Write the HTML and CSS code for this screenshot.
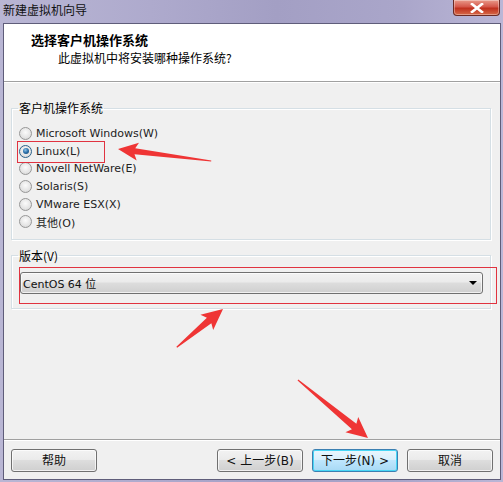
FILE: index.html
```html
<!DOCTYPE html>
<html lang="zh">
<head>
<meta charset="utf-8">
<title>新建虚拟机向导</title>
<link rel="stylesheet" href="styles.css">
</head>
<body>
<div class="window">
  <div class="titlebar">
    <span class="title">新建虚拟机向导</span>
    <div class="close">
      <svg width="14" height="10" viewBox="0 0 14 10"><path d="M2 1 L12 9 M12 1 L2 9" stroke="#fff" stroke-width="2.6" stroke-linecap="square"/></svg>
    </div>
  </div>
  <div class="client">
    <div class="header">
      <div class="h-title">选择客户机操作系统</div>
      <div class="h-sub">此虚拟机中将安装哪种操作系统?</div>
    </div>
    <div class="body">
      <fieldset class="group group-os">
        <legend>客户机操作系统</legend>
        <ul class="radios">
          <li class="radio-item"><span class="radio"></span>Microsoft Windows(W)</li>
          <li class="radio-item"><span class="radio checked"></span>Linux(L)</li>
          <li class="radio-item"><span class="radio"></span>Novell NetWare(E)</li>
          <li class="radio-item"><span class="radio"></span>Solaris(S)</li>
          <li class="radio-item"><span class="radio"></span>VMware ESX(X)</li>
          <li class="radio-item"><span class="radio"></span>其他(O)</li>
        </ul>
      </fieldset>
      <fieldset class="group group-ver">
        <legend>版本(V)</legend>
        <div class="combo">
          <span class="combo-text">CentOS 64 位</span>
          <span class="combo-arrow"></span>
        </div>
      </fieldset>
    </div>
    <div class="footer">
      <button class="btn">帮助</button>
      <div class="btn-group">
        <button class="btn">&lt; 上一步(B)</button>
        <button class="btn btn-default">下一步(N) &gt;</button>
        <button class="btn">取消</button>
      </div>
    </div>
  </div>
  <div class="mark mark-linux"></div>
  <div class="mark mark-combo"></div>
  <svg class="annot" width="503" height="482" viewBox="0 0 503 482">
    <g fill="#ef3535">
      <polygon transform="translate(118,149) rotate(187.35)" points="0,0 -20,-9 -17,-3 -94,-0.6 -94,0.6 -17,3 -20,9"/>
      <polygon transform="translate(223,309) rotate(-39.56)" points="0,0 -21,-10 -18,-3.5 -60,-0.6 -60,0.6 -18,3.5 -21,10"/>
      <polygon transform="translate(368,438) rotate(39.64)" points="0,0 -21,-10 -18,-3.5 -91,-0.6 -91,0.6 -18,3.5 -21,10"/>
    </g>
  </svg>
</div>
</body>
</html>
```
FILE: styles.css
```css
* { box-sizing: border-box; }
html, body { margin: 0; padding: 0; }
body {
  width: 503px;
  height: 482px;
  overflow: hidden;
  font-family: "DejaVu Sans", "Noto Sans CJK SC", sans-serif;
  color: #000;
}
.window {
  position: relative;
  width: 503px;
  height: 482px;
  background: linear-gradient(90deg, #b9b6d4 0%, #aeaacd 30%, #a39fc4 55%, #aaa6ca 80%, #bab6d6 100%);
  padding: 0 2px 2px 3px;
  display: flex;
  flex-direction: column;
}
.titlebar {
  height: 23px;
  display: flex;
  align-items: flex-start;
  justify-content: space-between;
  flex: none;
}
.title {
  font-family: "Noto Sans CJK SC", sans-serif;
  font-size: 12px;
  line-height: 20px;
  padding-left: 0;
  color: #111;
}
.close {
  width: 47px;
  height: 16px;
  margin-right: 1px;
  border: 1px solid #6b2a24;
  border-top: none;
  border-radius: 0 0 4px 4px;
  background: linear-gradient(180deg, #e99a8a 0%, #d5574a 45%, #c0301e 55%, #d66a48 100%);
  box-shadow: inset 0 0 0 1px rgba(255,255,255,0.35);
  display: flex;
  align-items: center;
  justify-content: center;
}
.client {
  flex: 1;
  border: 1px solid #5f5d7a;
  background: #f0f0f0;
  display: flex;
  flex-direction: column;
}
.header {
  height: 58px;
  background: #fff;
  border-bottom: 1px solid #a0a0a0;
  padding: 8px 0 0 27px;
  flex: none;
}
.h-title {
  font-family: "Noto Sans CJK SC", sans-serif;
  font-weight: bold;
  font-size: 13px;
  line-height: 16px;
}
.h-sub {
  font-family: "Noto Sans CJK SC", sans-serif;
  font-size: 12px;
  line-height: 17px;
  padding-left: 27px;
  margin-top: 1px;
}
.body {
  flex: 1;
  border-top: 1px solid #fff;
  padding: 17px 9px 0 7px;
}
.group {
  margin: 0;
  border: 1px solid #d5dfe5;
  box-shadow: inset 1px 1px 0 #fff, 1px 1px 0 #fff;
  padding: 0 6px;
  min-width: 0;
}
.group legend {
  font-family: "Noto Sans CJK SC", sans-serif;
  font-size: 12px;
  line-height: 16px;
  padding: 0 1px;
}
.group-os { padding-top: 9px; padding-bottom: 8px; }
.group-ver { margin-top: 8px; padding-top: 8px; padding-bottom: 14px; }
.radios {
  list-style: none;
  margin: 0 0 0 1px;
  padding: 0;
}
.radio-item {
  height: 17.6px;
  display: flex;
  align-items: center;
  font-size: 11px;
  color: #222;
}
.radio {
  width: 13px;
  height: 13px;
  border-radius: 50%;
  border: 1px solid #979797;
  background: radial-gradient(circle at 50% 40%, #fbfbfb 0%, #e4e4e4 60%, #cfcfcf 100%);
  margin-right: 4px;
  position: relative;
  flex: none;
}
.radio.checked {
  border-color: #2c628b;
}
.radio.checked::after {
  content: "";
  position: absolute;
  left: 2.5px;
  top: 2.5px;
  width: 6px;
  height: 6px;
  border-radius: 50%;
  background: radial-gradient(circle at 40% 35%, #8ec3e8 0%, #2a6fa8 50%, #0f3a66 100%);
}
.combo {
  height: 22px;
  margin: 0 1px 0 2px;
  border: 1px solid #707070;
  border-radius: 3px;
  background: linear-gradient(180deg, #f2f2f2 0%, #ebebeb 45%, #dddddd 50%, #cfcfcf 100%);
  box-shadow: inset 0 0 0 1px rgba(255,255,255,0.7);
  display: flex;
  align-items: center;
  justify-content: space-between;
  padding: 0 5px 0 2px;
}
.combo-text {
  font-size: 11px;
  color: #111;
}
.combo-arrow {
  width: 0;
  height: 0;
  border-left: 4px solid transparent;
  border-right: 4px solid transparent;
  border-top: 4px solid #000;
}
.footer {
  height: 40px;
  flex: none;
  border-top: 1px solid #a0a0a0;
  box-shadow: inset 0 1px 0 #fff;
  padding: 9px 7px 0 7px;
  display: flex;
  justify-content: space-between;
  align-items: flex-start;
}
.btn-group {
  display: flex;
  gap: 9px;
}
.btn {
  width: 86px;
  height: 23px;
  padding: 0;
  border: 1px solid #707070;
  border-radius: 3px;
  background: linear-gradient(180deg, #f2f2f2 0%, #ebebeb 45%, #dddddd 50%, #cfcfcf 100%);
  box-shadow: inset 0 0 0 1px rgba(255,255,255,0.7);
  font-family: "DejaVu Sans", "Noto Sans CJK SC", sans-serif;
  font-size: 12px;
  color: #111;
  line-height: 20px;
}
.btn-default {
  border-color: #3c7fb1;
  background: linear-gradient(180deg, #eaf6fd 0%, #d9f0fc 45%, #bee6fd 50%, #a7d9f5 100%);
  box-shadow: inset 0 0 0 1px #48d6f5;
}
.mark {
  position: absolute;
  border: 1px solid #e03340;
}
.mark-linux { left: 17px; top: 141px; width: 88px; height: 22px; }
.mark-combo { left: 19px; top: 267px; width: 478px; height: 37px; }
.annot {
  position: absolute;
  left: 0;
  top: 0;
  pointer-events: none;
}
```
